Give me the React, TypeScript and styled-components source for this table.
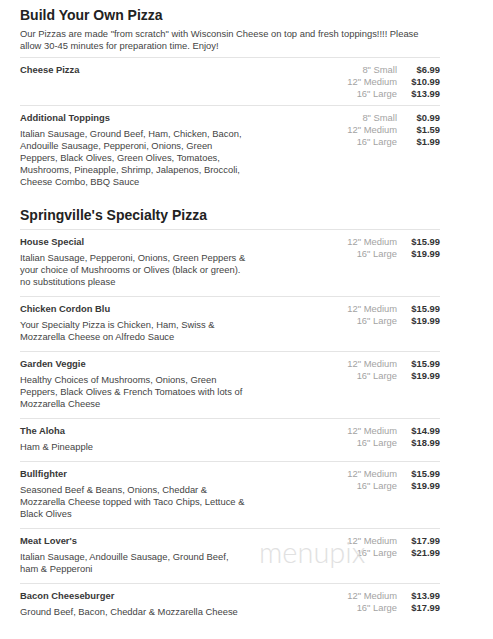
import styled, { createGlobalStyle } from "styled-components";

type Price = { size: string; amount: string };
type MenuItem = { name: string; desc?: string; prices: Price[] };
type MenuSection = { title: string; intro?: string; items: MenuItem[] };

const specialty = (medium: string, large: string): Price[] => [
  { size: '12" Medium', amount: medium },
  { size: '16" Large', amount: large },
];

const sections: MenuSection[] = [
  {
    title: "Build Your Own Pizza",
    intro:
      'Our Pizzas are made "from scratch" with Wisconsin Cheese on top and fresh toppings!!!! Please allow 30-45 minutes for preparation time. Enjoy!',
    items: [
      {
        name: "Cheese Pizza",
        prices: [
          { size: '8" Small', amount: "$6.99" },
          { size: '12" Medium', amount: "$10.99" },
          { size: '16" Large', amount: "$13.99" },
        ],
      },
      {
        name: "Additional Toppings",
        desc: "Italian Sausage, Ground Beef, Ham, Chicken, Bacon, Andouille Sausage, Pepperoni, Onions, Green Peppers, Black Olives, Green Olives, Tomatoes, Mushrooms, Pineapple, Shrimp, Jalapenos, Broccoli, Cheese Combo, BBQ Sauce",
        prices: [
          { size: '8" Small', amount: "$0.99" },
          { size: '12" Medium', amount: "$1.59" },
          { size: '16" Large', amount: "$1.99" },
        ],
      },
    ],
  },
  {
    title: "Springville's Specialty Pizza",
    items: [
      {
        name: "House Special",
        desc: "Italian Sausage, Pepperoni, Onions, Green Peppers & your choice of Mushrooms or Olives (black or green). no substitutions please",
        prices: specialty("$15.99", "$19.99"),
      },
      {
        name: "Chicken Cordon Blu",
        desc: "Your Specialty Pizza is Chicken, Ham, Swiss & Mozzarella Cheese on Alfredo Sauce",
        prices: specialty("$15.99", "$19.99"),
      },
      {
        name: "Garden Veggie",
        desc: "Healthy Choices of Mushrooms, Onions, Green Peppers, Black Olives & French Tomatoes with lots of Mozzarella Cheese",
        prices: specialty("$15.99", "$19.99"),
      },
      {
        name: "The Aloha",
        desc: "Ham & Pineapple",
        prices: specialty("$14.99", "$18.99"),
      },
      {
        name: "Bullfighter",
        desc: "Seasoned Beef & Beans, Onions, Cheddar & Mozzarella Cheese topped with Taco Chips, Lettuce & Black Olives",
        prices: specialty("$15.99", "$19.99"),
      },
      {
        name: "Meat Lover's",
        desc: "Italian Sausage, Andouille Sausage, Ground Beef, ham & Pepperoni",
        prices: specialty("$17.99", "$21.99"),
      },
      {
        name: "Bacon Cheeseburger",
        desc: "Ground Beef, Bacon, Cheddar & Mozzarella Cheese",
        prices: specialty("$13.99", "$17.99"),
      },
    ],
  },
];

export default function App() {
  return (
    <>
      <GlobalStyle />
      <Page>
        {sections.map((section) => (
          <Section key={section.title}>
            <SectionTitle>{section.title}</SectionTitle>
            {section.intro && <Intro>{section.intro}</Intro>}
            <ItemList>
              {section.items.map((item) => (
                <Row key={item.name}>
                  <Info>
                    <Name>{item.name}</Name>
                    {item.desc && <Desc>{item.desc}</Desc>}
                  </Info>
                  <PriceTable>
                    {item.prices.map((p) => (
                      <PriceLine key={p.size}>
                        <Size>{p.size}</Size>
                        <Amount>{p.amount}</Amount>
                      </PriceLine>
                    ))}
                  </PriceTable>
                </Row>
              ))}
            </ItemList>
          </Section>
        ))}
        <Watermark aria-hidden="true">menupix</Watermark>
      </Page>
    </>
  );
}

const GlobalStyle = createGlobalStyle`
  body {
    margin: 0;
    background: #fff;
    font-family: "Liberation Sans", Arial, sans-serif;
    color: #333;
  }
`;

const Page = styled.div`
  position: relative;
  width: 420px;
  padding: 6px 0 0 20px;
`;

const Section = styled.section`
  & + & {
    margin-top: 10px;
  }
`;

const SectionTitle = styled.h2`
  margin: 0;
  font-size: 14px;
  line-height: 18px;
  font-weight: bold;
  color: #222;
`;

const Intro = styled.p`
  margin: 4px 0 0;
  width: 410px;
  font-size: 9.4px;
  line-height: 12px;
  color: #444;
`;

const ItemList = styled.div`
  margin-top: 5px;
`;

const Row = styled.div`
  display: flex;
  align-items: flex-start;
  border-top: 1px solid #e4e4e4;
  padding: 6px 0 5px;
`;

const Info = styled.div`
  flex: 1;
`;

const Name = styled.div`
  font-size: 9.4px;
  line-height: 12px;
  font-weight: bold;
  color: #383838;
`;

const Desc = styled.p`
  margin: 4px 0 3px;
  width: 226px;
  font-size: 9.4px;
  line-height: 12px;
  color: #444;
`;

const PriceTable = styled.div`
  display: flex;
  flex-direction: column;
`;

const PriceLine = styled.div`
  display: grid;
  grid-template-columns: 70px 43px;
  font-size: 9.4px;
  line-height: 12px;
`;

const Size = styled.span`
  text-align: right;
  color: #a3a3a3;
`;

const Amount = styled.span`
  text-align: right;
  font-weight: bold;
  color: #333;
`;

const Watermark = styled.div`
  position: absolute;
  top: 537px;
  left: 259px;
  font-family: Lato, "Open Sans", sans-serif;
  font-weight: 300;
  font-size: 29px;
  line-height: 29px;
  color: #dcdcdc;
  opacity: 0.85;
  pointer-events: none;
`;
